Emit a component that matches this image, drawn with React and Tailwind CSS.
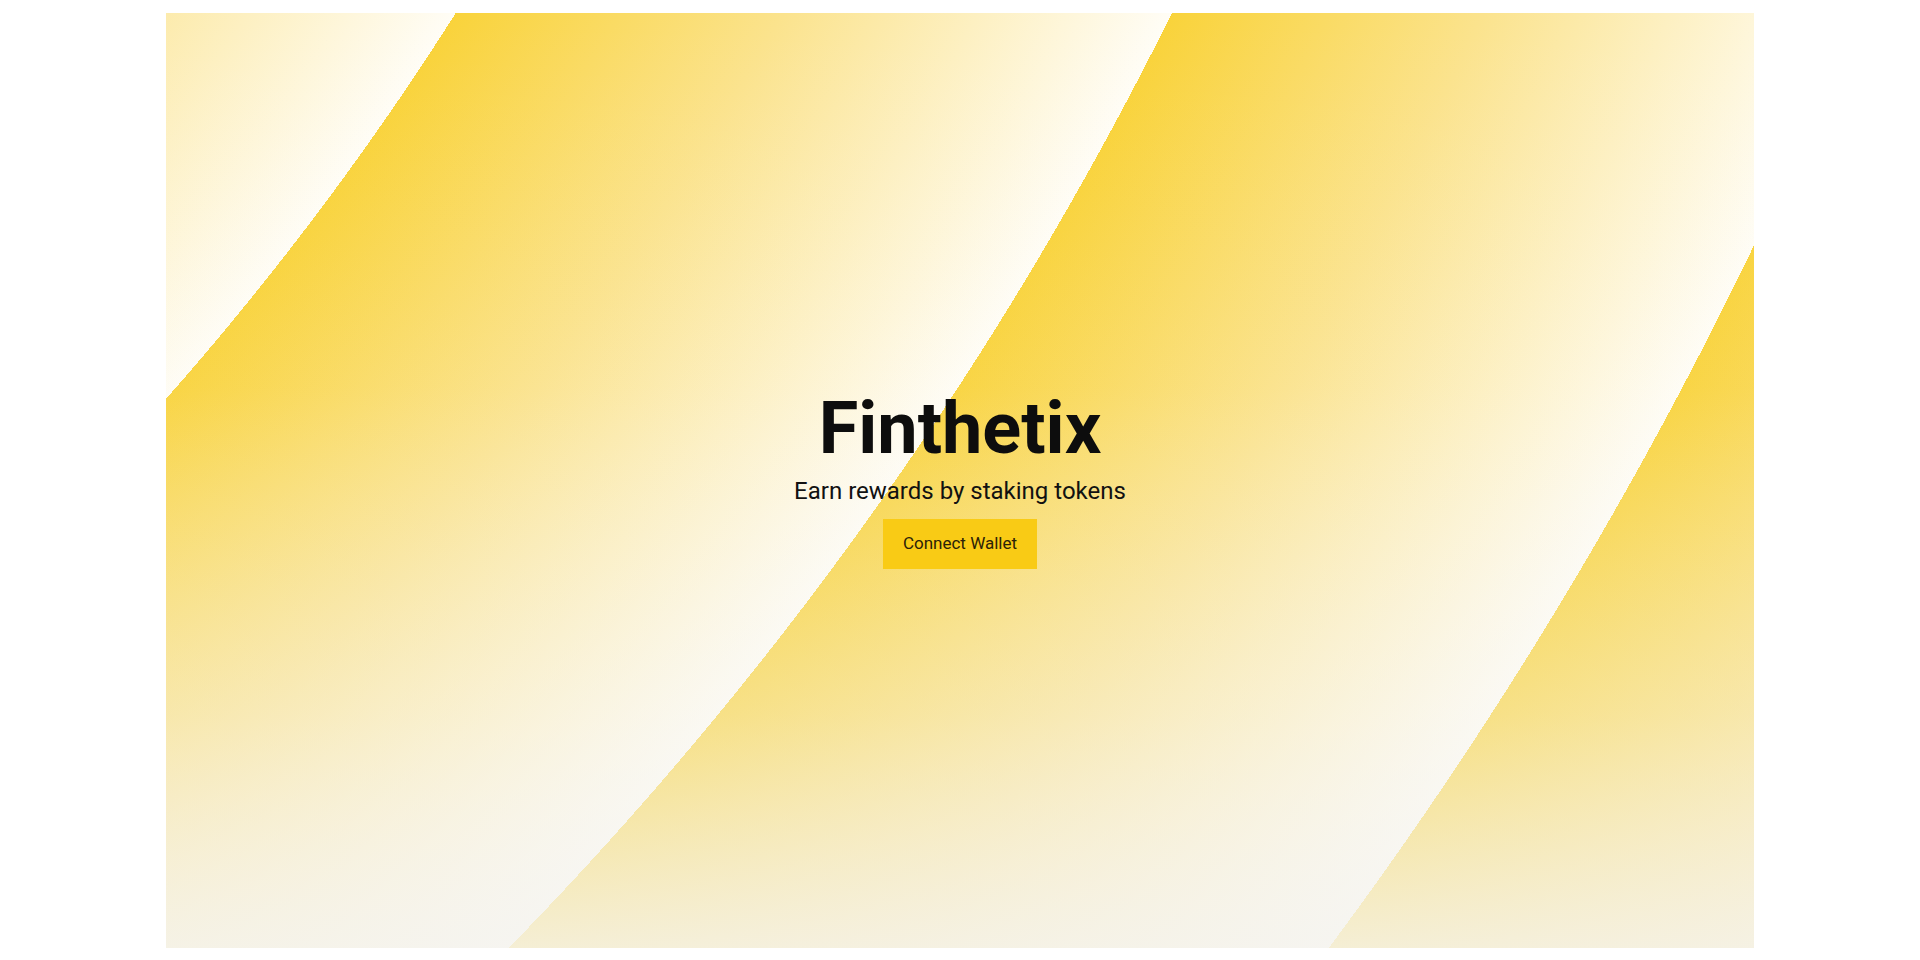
import React from "react";

const App = () => {
  return (
    <div className="w-full h-screen bg-white pt-[13px] font-[Roboto,sans-serif]">
      {/* hero panel: repeating radial bands + bottom haze */}
      <div className="mx-auto w-[1588px] h-[935px] flex flex-col items-center justify-center bg-[image:linear-gradient(to_bottom,rgba(244,243,239,0)_0%,rgba(244,243,239,0.06)_40%,rgba(244,243,239,0.42)_75%,rgba(244,243,239,0.85)_100%),repeating-radial-gradient(circle_at_-2284px_-1631px,#f9d33b_547px,#fbe38d_828px,#fffdf6_1172px)]">
        <h1 className="text-[72px] leading-none font-bold text-[#0d0d0d]">Finthetix</h1>
        <p className="mt-[10px] text-2xl text-[#111111]">Earn rewards by staking tokens</p>
        <button className="mt-3 h-[50px] px-5 bg-[#f9cb15] text-[17px] text-[#2b2208]">Connect Wallet</button>
      </div>
    </div>
  );
};

export default App;
